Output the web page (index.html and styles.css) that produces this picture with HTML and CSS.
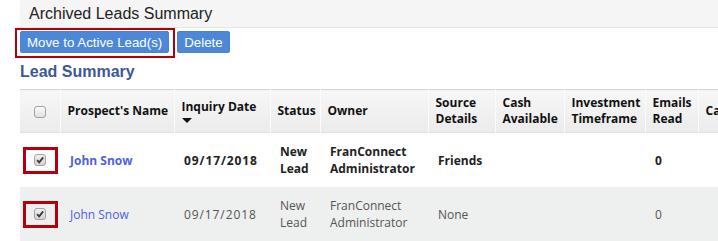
FILE: index.html
```html
<!DOCTYPE html>
<html lang="en">
  <head>
    <meta charset="UTF-8" />
    <title>Archived Leads Summary</title>
    <link rel="stylesheet" href="styles.css">
  </head>
  <body>
    <div class="topbar">Archived Leads Summary</div>

    <div class="actions">
      <span class="callout"><button class="btn">Move to Active Lead(s)</button></span>
      <button class="btn">Delete</button>
    </div>

    <h2 class="section-title">Lead Summary</h2>

    <table class="leads">
      <colgroup>
        <col class="c-check">
        <col class="c-name">
        <col class="c-date">
        <col class="c-status">
        <col class="c-owner">
        <col class="c-source">
        <col class="c-cash">
        <col class="c-invest">
        <col class="c-emails">
        <col class="c-more">
      </colgroup>
      <thead>
        <tr>
          <th class="check"><span class="cb"></span></th>
          <th>Prospect's Name</th>
          <th>Inquiry Date<span class="sort"></span></th>
          <th>Status</th>
          <th>Owner</th>
          <th>Source<br>Details</th>
          <th>Cash<br>Available</th>
          <th>Investment<br>Timeframe</th>
          <th>Emails<br>Read</th>
          <th>Campaign</th>
        </tr>
      </thead>
      <tbody>
        <tr class="unread">
          <td class="check">
            <span class="mark"><span class="cb checked"><svg viewBox="0 0 10 10" width="10" height="10"><path d="M2 5.2 L4.2 7.4 L8.2 2.4" fill="none" stroke="#3a3a3a" stroke-width="1.8"/></svg></span></span>
          </td>
          <td><a href="#" class="lead-link">John Snow</a></td>
          <td class="date">09/17/2018</td>
          <td>New<br>Lead</td>
          <td>FranConnect<br>Administrator</td>
          <td>Friends</td>
          <td></td>
          <td></td>
          <td>0</td>
          <td></td>
        </tr>
        <tr class="alt">
          <td class="check">
            <span class="mark"><span class="cb checked"><svg viewBox="0 0 10 10" width="10" height="10"><path d="M2 5.2 L4.2 7.4 L8.2 2.4" fill="none" stroke="#3a3a3a" stroke-width="1.8"/></svg></span></span>
          </td>
          <td><a href="#" class="lead-link">John Snow</a></td>
          <td class="date">09/17/2018</td>
          <td>New<br>Lead</td>
          <td>FranConnect<br>Administrator</td>
          <td>None</td>
          <td></td>
          <td></td>
          <td>0</td>
          <td></td>
        </tr>
      </tbody>
    </table>
  </body>
</html>
```

FILE: styles.css
```css
body {
  margin: 0;
  padding: 0 0 0 20px;
  overflow: hidden;
  font-family: "Liberation Sans", Arial, sans-serif;
  color: #222;
}

.topbar {
  height: 27px;
  line-height: 27px;
  padding-left: 9px;
  font-size: 16px;
  color: #222;
  background: #f5f5f5;
  border-bottom: 1px solid #e6e6e6;
}

.actions {
  display: flex;
  align-items: flex-start;
  gap: 2px;
  margin-left: -5px;
}

.callout {
  display: inline-flex;
  padding: 1px 4px 3px 3px;
  border: 2px solid #b0000e;
}

.btn {
  height: 22px;
  margin: 0;
  padding: 0 6px;
  font-family: "Liberation Sans", Arial, sans-serif;
  font-size: 13.3px;
  color: #fff;
  background: #4d88d8;
  border: 1px solid #4a84d2;
  border-radius: 2px;
  cursor: pointer;
}
.actions > .btn {
  margin-top: 3px;
}

.section-title {
  margin: 4px 0 8px;
  font-size: 16px;
  line-height: 19px;
  color: #3b5997;
}

.leads {
  width: 778px;
  table-layout: fixed;
  border-collapse: collapse;
  font-family: "Open Sans", "Noto Sans", sans-serif;
  font-size: 12px;
}

.c-check { width: 40px; }
.c-name { width: 114px; }
.c-date { width: 96px; }
.c-status { width: 50px; }
.c-owner { width: 108px; }
.c-source { width: 67px; }
.c-cash { width: 69px; }
.c-invest { width: 81px; }
.c-emails { width: 53px; }
.c-more { width: 100px; }

.leads thead tr {
  border-top: 1px solid #d6d6d6;
  border-bottom: 1px solid #e2e2e2;
}

.leads th {
  height: 42px;
  padding: 0 7px;
  text-align: left;
  vertical-align: middle;
  font-weight: 700;
  line-height: 16px;
  color: #111;
  white-space: nowrap;
  background: linear-gradient(#f7f7f7, #ebebeb);
  border-left: 1px solid #fbfbfb;
}
.leads th:first-child {
  border-left: 0;
}

.leads td {
  height: 54px;
  padding: 0 10px;
  vertical-align: middle;
  line-height: 17px;
  color: #555;
  white-space: nowrap;
}

.leads .check {
  padding: 0;
  text-align: center;
}

.unread td {
  font-weight: 700;
  color: #222;
}

.alt td {
  background: #eeefef;
}

.date {
  letter-spacing: 0.9px;
}

.lead-link {
  color: #4f5fe2;
  text-decoration: none;
}

.sort {
  display: block;
  width: 0;
  margin-top: 3px;
  border-left: 5px solid transparent;
  border-right: 5px solid transparent;
  border-top: 5px solid #111;
}

.cb {
  display: inline-flex;
  align-items: center;
  justify-content: center;
  box-sizing: border-box;
  width: 12px;
  height: 12px;
  vertical-align: middle;
  border: 1px solid #a3a3a3;
  border-radius: 3px;
  background: linear-gradient(#fbfbfb, #e2e2e2);
}
.cb.checked {
  background: linear-gradient(#f0f0f0, #d4d4d4);
}

.mark {
  display: inline-flex;
  align-items: center;
  justify-content: center;
  width: 29px;
  height: 21px;
  border: 3px solid #b3000f;
}
```
